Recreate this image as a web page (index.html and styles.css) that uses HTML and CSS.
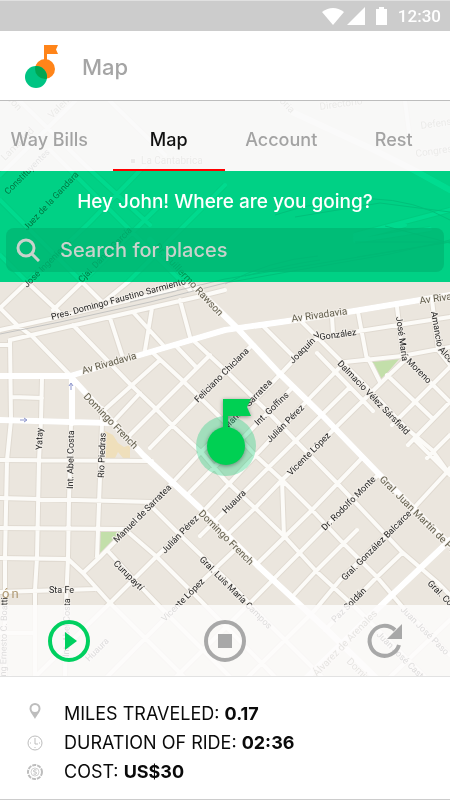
FILE: index.html
```html
<!DOCTYPE html>
<html lang="en">
<head>
<meta charset="utf-8">
<meta name="viewport" content="width=device-width, initial-scale=1">
<title>Map</title>
<link rel="stylesheet" href="styles.css">
</head>
<body>
<div class="status-bar">
  <svg class="status-icons" viewBox="0 0 68 20" aria-hidden="true">
    <path d="M0 5Q11-3 22 5L11 18Z"/>
    <path d="M25 18L43 0V18Z"/>
    <path d="M54 2h3V0h5v2h3v16H54Z"/>
  </svg>
  <time>12:30</time>
</div>

<header class="app-header">
  <svg class="logo" viewBox="24 44 36 45" aria-hidden="true">
    <defs><clipPath id="overlap"><circle cx="36" cy="77" r="11"/></clipPath></defs>
    <path fill="#ff8419" d="M44 45H58L56 49.500L58 54H47V62H44Z"/>
    <circle cx="45" cy="69" r="10" fill="#ff8419"/>
    <circle cx="36" cy="77" r="11" fill="#00c483"/>
    <circle cx="45" cy="69" r="10" fill="#00a651" clip-path="url(#overlap)"/>
  </svg>
  <h1>Map</h1>
</header>

<main class="stage">
  <svg class="map" viewBox="0 101 450 576" preserveAspectRatio="xMidYMid slice" role="img" aria-label="Street map">
    <rect x="-200" y="-200" width="900" height="1200" fill="#ebe6de"/>
    <path fill="#c3dfaa" d="M368 361L400 358L381 380ZM100 532H122L100 554Z"/>
    <path fill="#efdfbb" d="M105 431L113 435L118 443L124 447L130 445V458H123L118 452L115 458H105Z"/>
    <defs>
      <path id="minor" d="M10 677V677M10 340L11 420L7 460L5 558L5 677M42 378L41 420L39 460L37 558L35 590V677M71 423L69 500L68 558L66 603L65 677M102 408V423L100 477L98 530L97 557
      M0 460L152 461M0 498L152 502M0 528L128 529M0 558L68 559M0 592L95 589M0 633H35M12 397L42 398M0 345H10
      M10 340L197 297L225 290M0 330L50 319L175 289
      M68 373L33 337L17 325L0 308L90 222L150 160M0 255L27 282L60 313M53 310L82 282L165 200M0 200L82 282L105 305M100 305L128 282L225 185M50 150L135 235L190 290M0 175L75 101M20 101L85 165L150 225M110 101L165 155
      M73 325L128 382L155 408L173 426L202 453L225 480L255 508L285 537L317 572L358 610L425 677M133 312L163 345M177 347L197 368M110 318L122 355M152 308L145 350M180 300L190 337
      M153 353L182 380L225 422L255 455L282 480L312 510L343 543L377 577L405 610L450 655
      M195 342L225 370L268 412L295 440L337 483L402 552L438 583L450 595
      M102 412L160 360M113 422L140 393M130 435L210 355M150 448L200 397L250 347M173 482L200 453L272 383L308 345L318 338L353 332L450 317M173 482L100 557L83 573
      M68 559L83 573L110 603L184 677M128 532L157 557L200 600L275 677M152 507L178 533L227 580L265 620L322 677M107 550L142 588L163 610L230 677
      M35 677L110 603L155 558L197 518L300 408L345 362L402 356L450 347M200 536L268 468L350 387M107 677L200 583L238 547M225 537L255 508L282 480L325 438L387 377L407 358M187 495L293 387
      M258 563L312 510L362 458M176 677L250 603L322 530L378 475M292 597L315 572L357 530M248 677L315 610L340 580L412 510L447 472L450 468M325 630L377 577L402 553
      M302 322L363 383L405 427L432 450L450 475M317 353L373 411M368 358L380 382M387 375L432 418M403 355L450 402L408 445M427 458L450 435M392 425L450 367M358 312L367 360M397 307L403 358M432 300L438 350L450 365M332 317L333 333M262 325L292 355M282 480L284 537M415 440L450 475M390 677L450 620
      M355 235L450 210M355 238L405 225M405 101L410 140M355 241L430 229"/>
      <path id="major" d="M0 376H70L140 355L225 330L330 315L450 295M72 377V423M0 420L71 422L110 423M70 376L143 455L200 508L257 565L325 628L375 677M150 240L190 282L237 328L278 372L322 415L378 473L450 545M450 540L392 595L300 684M290 111L370 148L410 168L450 190"/>
    </defs>
    <g class="road-edges"><use href="#minor"/><use href="#major"/></g>
    <g class="roads"><use href="#minor" class="minor"/><use href="#major" class="major"/></g>
    <g class="rail">
      <path d="M0 334L60 322L150 302L225 283L310 268L390 254L450 240"/>
      <path d="M130 302L225 279L310 265L450 242M225 284Q270 260 318 256M245 276Q290 264 320 260M275 215Q380 180 450 220M295 217L380 203L450 212M355 242H400L450 242M357 257L450 242M385 226L450 243"/>
    </g>
    <g class="one-way"><path d="M71 390V384M69 386L71 383L73 386M20 420H26M24 418L27 420L24 422"/></g>
    <g class="labels">
      <text transform="translate(52 320) rotate(-15)">Pres. Domingo Faustino Sarmiento</text>
      <text transform="translate(8 195) rotate(-45)">Constituyentes</text>
      <text transform="translate(27 231) rotate(-47)">Juez de la Gandara</text>
      <text transform="translate(27 288) rotate(-45)">José Ingenieros</text>
      <text transform="translate(82 283) rotate(-46)">Cjal. Daniel García</text>
      <text transform="translate(198 403) rotate(-45)">Feliciano Chiclana</text>
      <text transform="translate(227 430) rotate(-46)">Manuel Sarratea</text>
      <text transform="translate(258 426) rotate(-44)">Int. Goffins</text>
      <text transform="translate(270 443) rotate(-45)">Julián Pérez</text>
      <text transform="translate(293 364) rotate(-45)">Joaquín V.</text>
      <text transform="translate(320 340) rotate(-8)">González</text>
      <text transform="translate(337 364) rotate(46)">Dalmacio Vélez Sársfield</text>
      <text transform="translate(396 317) rotate(82)">José María</text>
      <text transform="translate(406 362) rotate(45)">Moreno</text>
      <text transform="translate(431 312) rotate(80)">Amancio</text>
      <text transform="translate(438 350) rotate(48)">Alcorta</text>
      <text transform="translate(42 450) rotate(-88)">Yatay</text>
      <text transform="translate(73 489) rotate(-89)">Int. Abel Costa</text>
      <text transform="translate(104 478) rotate(-88)">Rio Piedras</text>
      <text transform="translate(117 543) rotate(-45)">Manuel de Sarratea</text>
      <text transform="translate(165 554) rotate(-46)">Julián Pérez</text>
      <text transform="translate(113 564) rotate(45)">Curupaytí</text>
      <text transform="translate(49 593)">Sta Fe</text>
      <text transform="translate(226 514) rotate(-45)">Huaura</text>
      <text transform="translate(291 476) rotate(-45)">Vicente López</text>
      <text transform="translate(325 531) rotate(-45)">Dr. Rodolfo Monte</text>
      <text transform="translate(345 581) rotate(-45)">Gral. González Balcarce</text>
      <text transform="translate(199 560) rotate(45)">Gral. Luis María Campos</text>
      <text transform="translate(165 622) rotate(-45)">Vicente López</text>
      <text transform="translate(335 623) rotate(-45)">Paz Soldán</text>
      <text transform="translate(427 584) rotate(45)">Gral. Costa</text>
      <text transform="translate(69 657) rotate(-89)">Int. Abel Costa</text>
      <text transform="translate(6 679) rotate(-89)">Ing Ernesto C. Boatti</text>
      <text transform="translate(89 662) rotate(-45)">Huaura</text>
      <text transform="translate(400 610) rotate(45)">Juan José Paso</text>
      <text transform="translate(376 635) rotate(45)">Juan José Castelli</text>
    </g>
    <g class="labels main-labels">
      <text transform="translate(83 374) rotate(-16)">Av Rivadavia</text>
      <text transform="translate(292 322) rotate(-8)">Av Rivadavia</text>
      <text transform="translate(420 304) rotate(-8)">Av Rivadavia</text>
      <text transform="translate(154 247) rotate(47)">Dr. Guillermo Rawson</text>
      <text transform="translate(83 397) rotate(46)">Domingo French</text>
      <text transform="translate(198 514) rotate(45)">Domingo French</text>
      <text transform="translate(379 480) rotate(45)">Gral. Juan Martín de Pueyrredón</text>
      <text transform="translate(317 677) rotate(-46)">Álvarez de Arenales</text>
      <text transform="translate(346 662) rotate(45)">Domingo</text>
      <text transform="translate(141 164)">La Cantabrica</text>
      <text transform="translate(5 161) rotate(-45)">Lamadrid</text>
      <text transform="translate(52 119) rotate(-45)">Valentin</text>
      <text transform="translate(320 110) rotate(-8)">Directorio</text>
      <text transform="translate(421 129) rotate(-8)">Defensa</text>
      <text transform="translate(416 157) rotate(-8)">Congreso</text>
      <text transform="translate(267 89) rotate(46)">Victoria</text>
      <text transform="translate(3 95) rotate(48)">Leon</text>
      <rect x="131" y="159" width="4" height="4"/>
    </g>
    <text class="district" x="-6" y="598">yón</text>
    <circle cx="226" cy="446" r="30" fill="#00ca72" fill-opacity=".31"/>
    <g class="pin"><circle cx="226" cy="446" r="19"/><path d="M223 399H251L247 407L251 416H228V430H223Z"/></g>
  </svg>

  <nav class="tabs" aria-label="Sections">
    <a href="#way-bills">Way Bills</a>
    <a href="#map" class="active" aria-current="page">Map</a>
    <a href="#account">Account</a>
    <a href="#rest">Rest</a>
  </nav>

  <form class="search">
    <label for="place">Hey John! Where are you going?</label>
    <div class="search-field">
      <svg viewBox="0 0 24 24" aria-hidden="true"><circle cx="10" cy="10" r="8"/><path d="M16 16L23 23"/></svg>
      <input id="place" type="search" placeholder="Search for places">
    </div>
  </form>

  <div class="controls">
    <button type="button" aria-label="Start ride"><svg viewBox="0 0 42 42"><circle class="ring go" cx="21" cy="21" r="19"/><path class="go-fill" d="M17 12L29 21L17 30Z"/></svg></button>
    <button type="button" aria-label="Stop ride"><svg viewBox="0 0 42 42"><circle class="ring" cx="21" cy="21" r="19"/><rect class="fill" x="14" y="14" width="14" height="14"/></svg></button>
    <button type="button" aria-label="Restart ride"><svg viewBox="0 0 42 42"><path class="ring" d="M35 10A15 15 0 1 0 39 25"/><path class="fill" d="M42 4V19H27Z"/></svg></button>
  </div>
</main>

<section class="stats" aria-label="Ride details">
  <p>
    <svg viewBox="0 0 16 16" aria-hidden="true"><path class="fill" fill-rule="evenodd" d="M8 0A5.500 5.500 0 0 0 2.500 5.500C2.500 9 6 12 8 16C10 12 13.500 9 13.500 5.500A5.500 5.500 0 0 0 8 0ZM8 2A3.500 3.500 0 0 1 8 9A3.500 3.500 0 0 1 8 2Z"/></svg>
    <span>MILES TRAVELED: <strong>0.17</strong></span>
  </p>
  <p>
    <svg viewBox="0 0 16 16" aria-hidden="true"><circle class="line" cx="8" cy="8" r="7"/><path class="line" d="M8 3V9H11M8 12V13M3 8H4M12 8H13"/></svg>
    <span>DURATION OF RIDE: <strong>02:36</strong></span>
  </p>
  <p>
    <svg viewBox="0 0 16 16" aria-hidden="true"><circle class="line scallop" cx="8" cy="8" r="7"/><circle class="line thin" cx="8" cy="8" r="4"/><path class="line" d="M9.500 6Q6.500 5 6.500 7Q6.500 8 8 8Q9.500 8 9.500 9Q9.500 11 6.500 10"/></svg>
    <span>COST: <strong>US$30</strong></span>
  </p>
</section>
</body>
</html>
```
FILE: styles.css
```css
* {
  box-sizing: border-box;
}

body {
  margin: 0;
  min-height: 100vh;
  display: flex;
  flex-direction: column;
  background: #fff;
  font-family: Inter, "Liberation Sans", sans-serif;
  color: #0a0a0a;
}

.status-bar {
  height: 31px;
  padding: 0 9px;
  display: flex;
  align-items: center;
  justify-content: flex-end;
  gap: 8px;
  background: #ccc;
  border-top: 1px solid #e0e0e0;
  color: #fff;
  font: 500 17px/20px Roboto, sans-serif;
}

.status-icons {
  width: 68px;
  height: 20px;
  margin-top: 2px;
  fill: #fff;
}

.app-header {
  height: 70px;
  padding: 2px 24px 0;
  display: flex;
  align-items: center;
  gap: 22px;
  border-bottom: 1px solid #bdbdbd;
}

.logo {
  width: 36px;
  height: 45px;
}

.app-header h1 {
  margin: 0;
  font-size: 22px;
  font-weight: 500;
  color: #a5a5a5;
}

.stage {
  position: relative;
  flex: 1;
  display: flex;
  flex-direction: column;
  overflow: hidden;
}

.map {
  position: absolute;
  inset: 0;
  width: 100%;
  height: 100%;
}

.road-edges {
  fill: none;
  stroke: #e0dad1;
  stroke-width: 6;
}

.roads {
  fill: none;
  stroke: #fcfbf8;
  stroke-linecap: round;
  stroke-linejoin: round;
}

.minor {
  stroke-width: 4;
}

.major {
  stroke-width: 6;
  stroke: #fff;
}

.rail {
  fill: none;
  stroke: #c4c4c2;
  stroke-width: 1;
}

.one-way {
  fill: none;
  stroke: #8d95cc;
  stroke-width: 1;
}

.labels {
  font: 9px Roboto, sans-serif;
  fill: #262626;
  stroke: #f3efe9;
  stroke-width: 2;
  paint-order: stroke;
}

.main-labels {
  font-size: 10px;
  fill: #64604f;
}

.district {
  font: 13px Roboto, sans-serif;
  letter-spacing: 2px;
  fill: #b09a74;
}

.pin {
  fill: #00d053;
  filter: drop-shadow(0 1px 2px rgb(0 0 0 / 40%));
}

.tabs,
.search,
.controls {
  position: relative;
}

.tabs {
  display: grid;
  grid-template-columns: repeat(4, 1fr);
  height: 70px;
  background: rgb(250 250 249 / 90%);
}

.tabs a {
  display: flex;
  align-items: center;
  justify-content: center;
  padding-top: 9px;
  border-bottom: 2px solid transparent;
  color: #a3a3a3;
  font-size: 18px;
  font-weight: 500;
  text-decoration: none;
}

.tabs a:first-child {
  padding-right: 14px;
}

.tabs .active {
  color: #111;
  border-color: #f00;
}

.search {
  height: 111px;
  padding: 16px 6px 10px;
  display: flex;
  flex-direction: column;
  justify-content: space-between;
  background: rgb(0 211 134 / 50%);
}

/* Tints the streets under the panel while keeping their labels legible. */
.search::before {
  content: "";
  position: absolute;
  inset: 0;
  background: rgb(0 241 190);
  mix-blend-mode: multiply;
}

.search label {
  position: relative;
  color: #fff;
  font-size: 19px;
  line-height: 30px;
  font-weight: 500;
  text-align: center;
}

.search-field {
  position: relative;
  display: flex;
  align-items: center;
  gap: 20px;
  height: 44px;
  padding: 0 10px;
  border-radius: 8px;
  background: rgb(0 181 115 / 75%);
}

.search-field svg {
  width: 24px;
  height: 24px;
  fill: none;
  stroke: #c9d2cc;
  stroke-width: 3;
}

.search-field input {
  flex: 1;
  min-width: 0;
  padding: 0;
  border: 0;
  outline: 0;
  background: none;
  color: #fff;
  font: 500 20px/24px Inter, sans-serif;
}

.search-field input::placeholder {
  color: #c9d2cc;
  opacity: 1;
}

.controls {
  height: 72px;
  margin-top: auto;
  padding: 0 48px;
  display: flex;
  align-items: center;
  justify-content: space-between;
  background: rgb(253 252 251 / 85%);
  border-bottom: 1px solid #e2e2e2;
}

.controls button {
  width: 42px;
  height: 42px;
  padding: 0;
  border: 0;
  background: none;
}

.controls svg {
  display: block;
}

.ring {
  fill: none;
  stroke: #a8a8a8;
  stroke-width: 4;
}

.go {
  stroke: #00d060;
}

.go-fill {
  fill: #00d060;
}

.fill {
  fill: #a8a8a8;
}

.stats {
  padding: 22px 27px 13px;
  border-bottom: 1px solid #ccc;
}

.stats p {
  display: flex;
  align-items: center;
  gap: 21px;
  margin: 0;
  font-size: 18px;
  line-height: 29px;
}

.stats svg {
  width: 16px;
  height: 16px;
}

.stats p:first-child svg {
  margin-bottom: 6px;
}

.stats .fill {
  fill: #bdbdbd;
}

.line {
  fill: none;
  stroke: #bdbdbd;
  stroke-width: 1;
}

.scallop {
  stroke-width: 2;
  stroke-dasharray: 4 1;
}

.thin {
  stroke: #d4d4d4;
}
```
